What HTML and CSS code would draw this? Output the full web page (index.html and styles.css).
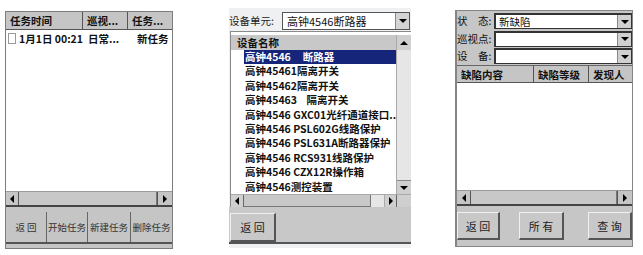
FILE: index.html
```html
<!DOCTYPE html>
<html lang="zh-CN">
<head>
<meta charset="utf-8">
<title>巡视任务</title>
<link rel="stylesheet" href="styles.css">
</head>
<body>
<div class="screen">

  <!-- Panel 1: task list -->
  <div class="panel p1">
    <div class="ghead">
      <div class="hc w77">任务时间</div>
      <div class="hc w45">巡视...</div>
      <div class="hc flex last">任务...</div>
    </div>
    <div class="gbody">
      <div class="trow">
        <span class="cell w77 pl2"><span class="chk"></span>1月1日 00:21</span>
        <span class="cell w45 pl5">日常...</span>
        <span class="cell flex pl9">新任务</span>
      </div>
    </div>
    <div class="hscroll hs1">
      <div class="sb sb-l"><i class="tri tl"></i></div>
      <div class="thumb"></div>
      <div class="sb sb-r"><i class="tri tr"></i></div>
    </div>
    <div class="tb1">
      <div class="tb1-row">
        <div class="tb1-btn w41">返 回</div>
        <div class="tb1-btn w41">开始任务</div>
        <div class="tb1-btn w43">新建任务</div>
        <div class="tb1-btn flex">删除任务</div>
      </div>
    </div>
  </div>

  <!-- Panel 2: equipment list -->
  <div class="panel p2">
    <div class="unit-row">
      <div class="unit-label">设备单元:</div>
      <div class="combo2">
        <div class="combo-text">高钟4546断路器</div>
        <div class="dd2"><i class="tri td"></i></div>
      </div>
    </div>
    <div class="listbox">
      <div class="lb-main">
        <div class="lb-content">
          <div class="lb-head">设备名称</div>
          <div class="item sel">高钟4546&nbsp;&nbsp;&nbsp;&nbsp;&nbsp;断路器</div>
          <div class="item">高钟45461隔离开关</div>
          <div class="item">高钟45462隔离开关</div>
          <div class="item">高钟45463&nbsp;&nbsp;&nbsp;&nbsp;隔离开关</div>
          <div class="item">高钟4546 GXC01光纤通道接口..</div>
          <div class="item">高钟4546 PSL602G线路保护</div>
          <div class="item">高钟4546 PSL631A断路器保护</div>
          <div class="item">高钟4546 RCS931线路保护</div>
          <div class="item">高钟4546 CZX12R操作箱</div>
          <div class="item">高钟4546测控装置</div>
        </div>
        <div class="vscroll">
          <div class="vb vb-up"><i class="tri tu"></i></div>
          <div class="vtrack"></div>
          <div class="vb vb-dn"><i class="tri td"></i></div>
        </div>
      </div>
      <div class="hscroll hs2">
        <div class="sb2 sb2-l"><i class="tri tl"></i></div>
        <div class="thumb2"></div>
        <div class="htrack2"></div>
        <div class="sb2 sb2-r"><i class="tri tr"></i></div>
        <div class="corner"></div>
      </div>
    </div>
    <div class="tb2">
      <div class="rbtn back2">返 回</div>
    </div>
    <div class="foot2"></div>
  </div>

  <!-- Panel 3: defect query -->
  <div class="panel p3">
    <div class="form">
      <div class="frow">
        <div class="flabel">状　态:</div>
        <div class="combo3"><div class="ctext3">新缺陷</div><div class="dd3"><i class="tri td"></i></div></div>
      </div>
      <div class="frow">
        <div class="flabel">巡视点:</div>
        <div class="combo3"><div class="ctext3"></div><div class="dd3"><i class="tri td"></i></div></div>
      </div>
      <div class="frow">
        <div class="flabel">设　备:</div>
        <div class="combo3"><div class="ctext3"></div><div class="dd3"><i class="tri td"></i></div></div>
      </div>
    </div>
    <div class="ghead gh3">
      <div class="hc w77">缺陷内容</div>
      <div class="hc w55">缺陷等级</div>
      <div class="hc flex last">发现人</div>
    </div>
    <div class="gbody3"></div>
    <div class="hscroll hs3">
      <div class="sb sb-l3"><i class="tri tl"></i></div>
      <div class="thumb"></div>
      <div class="sb sb-r3"><i class="tri tr"></i></div>
    </div>
    <div class="tb3">
      <div class="rbtn b3a">返 回</div>
      <div class="rbtn b3b">所 有</div>
      <div class="rbtn b3c">查 询</div>
    </div>
  </div>

</div>
</body>
</html>
```

FILE: styles.css
```css
* { box-sizing: border-box; }

body {
  margin: 0;
  background: #ffffff;
  font-family: "Noto Sans CJK SC", "Noto Sans", sans-serif;
  color: #111;
}

.screen {
  display: flex;
  align-items: flex-start;
  padding-left: 5px;
}

.panel { display: flex; flex-direction: column; }

/* generic */
.flex { flex: 1; }
.w77 { width: 77px; }
.w45 { width: 45px; }
.w55 { width: 55px; }
.w41 { width: 41px; }
.w43 { width: 43px; }
.pl2 { padding-left: 2px; }
.pl5 { padding-left: 5px; }
.pl9 { padding-left: 9px; }

.tri { display: block; width: 0; height: 0; }
.tl { border-right: 4px solid #000; border-top: 4px solid transparent; border-bottom: 4px solid transparent; }
.tr { border-left: 4px solid #000; border-top: 4px solid transparent; border-bottom: 4px solid transparent; }
.td { border-top: 4px solid #000; border-left: 4px solid transparent; border-right: 4px solid transparent; }
.tu { border-bottom: 4px solid #000; border-left: 4px solid transparent; border-right: 4px solid transparent; }

/* ---------- panel 1 ---------- */
.p1 {
  margin-top: 11px;
  width: 168px;
  height: 238px;
  border: 1px solid #7c7c7c;
  background: #fff;
}

.ghead {
  display: flex;
  height: 18px;
  background: #c5c5c5;
  border-bottom: 1px solid #555;
}
.hc {
  font-size: 10.5px;
  font-weight: 700;
  line-height: 17px;
  padding-left: 4px;
  border-right: 1px solid #555;
  white-space: nowrap;
  overflow: hidden;
}
.hc.last { border-right: none; }

.gbody { height: 161px; background: #fff; }
.trow {
  display: flex;
  height: 16px;
  align-items: center;
  font-size: 10.5px;
  font-weight: 700;
  white-space: nowrap;
}
.cell { display: flex; align-items: center; overflow: hidden; }
.chk {
  display: inline-block;
  width: 9px;
  height: 11px;
  border: 1px solid #9a9a9a;
  background: #fff;
  margin-right: 3px;
}

.hscroll { display: flex; background: #c5c5c5; }
.hs1 { height: 16px; border-top: 1px solid #9a9a9a; border-bottom: 2px solid #444; }
.sb { display: flex; align-items: center; justify-content: center; }
.sb-l { width: 13px; border-right: 1px solid #555; }
.sb-r { width: 15px; border-left: 1px solid #555; }
.thumb { flex: 1; background: #c8c8c8; border-right: 1px solid #777; }

.tb1 {
  height: 41px;
  background: #c5c5c5;
  padding-top: 5px;
}
.tb1-row {
  display: flex;
  height: 32px;
  border-bottom: 2px solid #555;
}
.tb1-btn {
  display: flex;
  align-items: center;
  justify-content: center;
  font-size: 9.5px;
  color: #333;
  border-right: 1px solid #666;
  white-space: nowrap;
}
.tb1-btn:last-child { border-right: none; }

/* ---------- panel 2 ---------- */
.p2 {
  margin-left: 56px;
  margin-top: 8px;
  width: 182px;
  height: 240px;
  background: #eef0f2;
}
.unit-row {
  display: flex;
  height: 23px;
  padding-top: 4px;
}
.unit-label {
  width: 53px;
  font-size: 10.5px;
  line-height: 18px;
  color: #222;
  white-space: nowrap;
  overflow: hidden;
}
.combo2 {
  width: 128px;
  height: 18px;
  display: flex;
  background: #fff;
  border: 1px solid #555;
}
.combo-text {
  flex: 1;
  font-size: 11px;
  line-height: 16px;
  padding-left: 4px;
  white-space: nowrap;
  overflow: hidden;
}
.dd2 {
  width: 14px;
  display: flex;
  align-items: center;
  justify-content: center;
  background: #d4d4d4;
  border-left: 1px solid #888;
}

.listbox {
  height: 176px;
  border-top: 1px solid #8a8a8a;
  border-left: 1px solid #8a8a8a;
  margin-left: 1px;
  display: flex;
  flex-direction: column;
  background: #fff;
}
.lb-main {
  flex: 1;
  display: flex;
  padding-top: 3px;
  min-height: 0;
}
.lb-content { flex: 1; overflow: hidden; }
.lb-head {
  height: 15px;
  background: #c8c8c8;
  font-size: 10.5px;
  font-weight: 700;
  line-height: 15px;
  padding-left: 6px;
}
.item {
  height: 14.4px;
  line-height: 14.4px;
  font-size: 10.5px;
  font-weight: 700;
  padding-left: 14px;
  white-space: nowrap;
  overflow: hidden;
}
.item.sel {
  background: #15257a;
  color: #fff;
  margin-left: 13px;
  padding-left: 1px;
}
.vscroll {
  width: 15px;
  display: flex;
  flex-direction: column;
  border-left: 1px solid #aaa;
}
.vb {
  display: flex;
  align-items: center;
  justify-content: center;
  background: #cfcfcf;
}
.vb-up { height: 15px; }
.vb-dn { height: 14px; border-top: 1px solid #888; }
.vtrack { flex: 1; background: #e6e6e6; }

.hs2 { height: 13px; border-top: 1px solid #aaa; }
.sb2 { display: flex; align-items: center; justify-content: center; width: 13px; background: #cfcfcf; }
.sb2-l { border-right: 1px solid #666; }
.sb2-r { border-left: 1px solid #aaa; border-right: 1px solid #666; }
.thumb2 { width: 127px; background: #c8c8c8; border-right: 1px solid #777; border-bottom: 1px solid #777; }
.htrack2 { width: 13px; background: #e6e6e6; }
.corner { flex: 1; background: #cfcfcf; }

.tb2 {
  height: 37px;
  background: #c8c8c8;
  padding-top: 6px;
  border-bottom: 2px solid #555;
  display: flex;
}
.foot2 { flex: 1; }

.rbtn {
  display: flex;
  align-items: center;
  justify-content: center;
  font-size: 11px;
  color: #222;
  background: #c8c8c8;
  border-top: 1px solid #f0f0f0;
  border-left: 1px solid #f0f0f0;
  border-right: 2px solid #555;
  border-bottom: 2px solid #555;
  white-space: nowrap;
}
.back2 { width: 46px; height: 29px; margin-left: 1px; }

/* ---------- panel 3 ---------- */
.p3 {
  margin-left: 44px;
  margin-top: 10px;
  width: 178px;
  height: 237px;
  border: 1px solid #858585;
  border-left-width: 2px;
  background: #c6c6c6;
}
.form {
  height: 54px;
  padding-top: 2px;
  display: flex;
  flex-direction: column;
  gap: 1.5px;
}
.frow { display: flex; height: 16px; }
.flabel {
  width: 37px;
  font-size: 10.5px;
  line-height: 16px;
  color: #111;
  white-space: nowrap;
  overflow: hidden;
}
.combo3 {
  flex: 1;
  display: flex;
  align-items: center;
  background: #fff;
  border: 1px solid #333;
  border-top-width: 2px;
  border-left-width: 2px;
}
.ctext3 {
  flex: 1;
  font-size: 10.5px;
  line-height: 12px;
  padding-left: 3px;
  white-space: nowrap;
}
.dd3 {
  width: 14px;
  height: 100%;
  display: flex;
  align-items: center;
  justify-content: center;
  background: #d0d0d0;
  border-left: 1px solid #888;
}

.gh3 { border-top: 1px solid #666; }
.gbody3 { height: 107px; background: #fff; }

.hs3 { height: 16px; border-top: 1px solid #9a9a9a; border-bottom: 2px solid #444; }
.sb-l3 { width: 14px; border-right: 1px solid #555; }
.sb-r3 { width: 15px; border-left: 1px solid #555; }

.tb3 {
  flex: 1;
  display: flex;
  align-items: flex-start;
  padding-top: 6px;
}
.tb3 .rbtn { height: 28px; }
.b3a { width: 43px; }
.b3b { width: 45px; margin-left: 19px; }
.b3c { width: 44px; margin-left: auto; }
```
